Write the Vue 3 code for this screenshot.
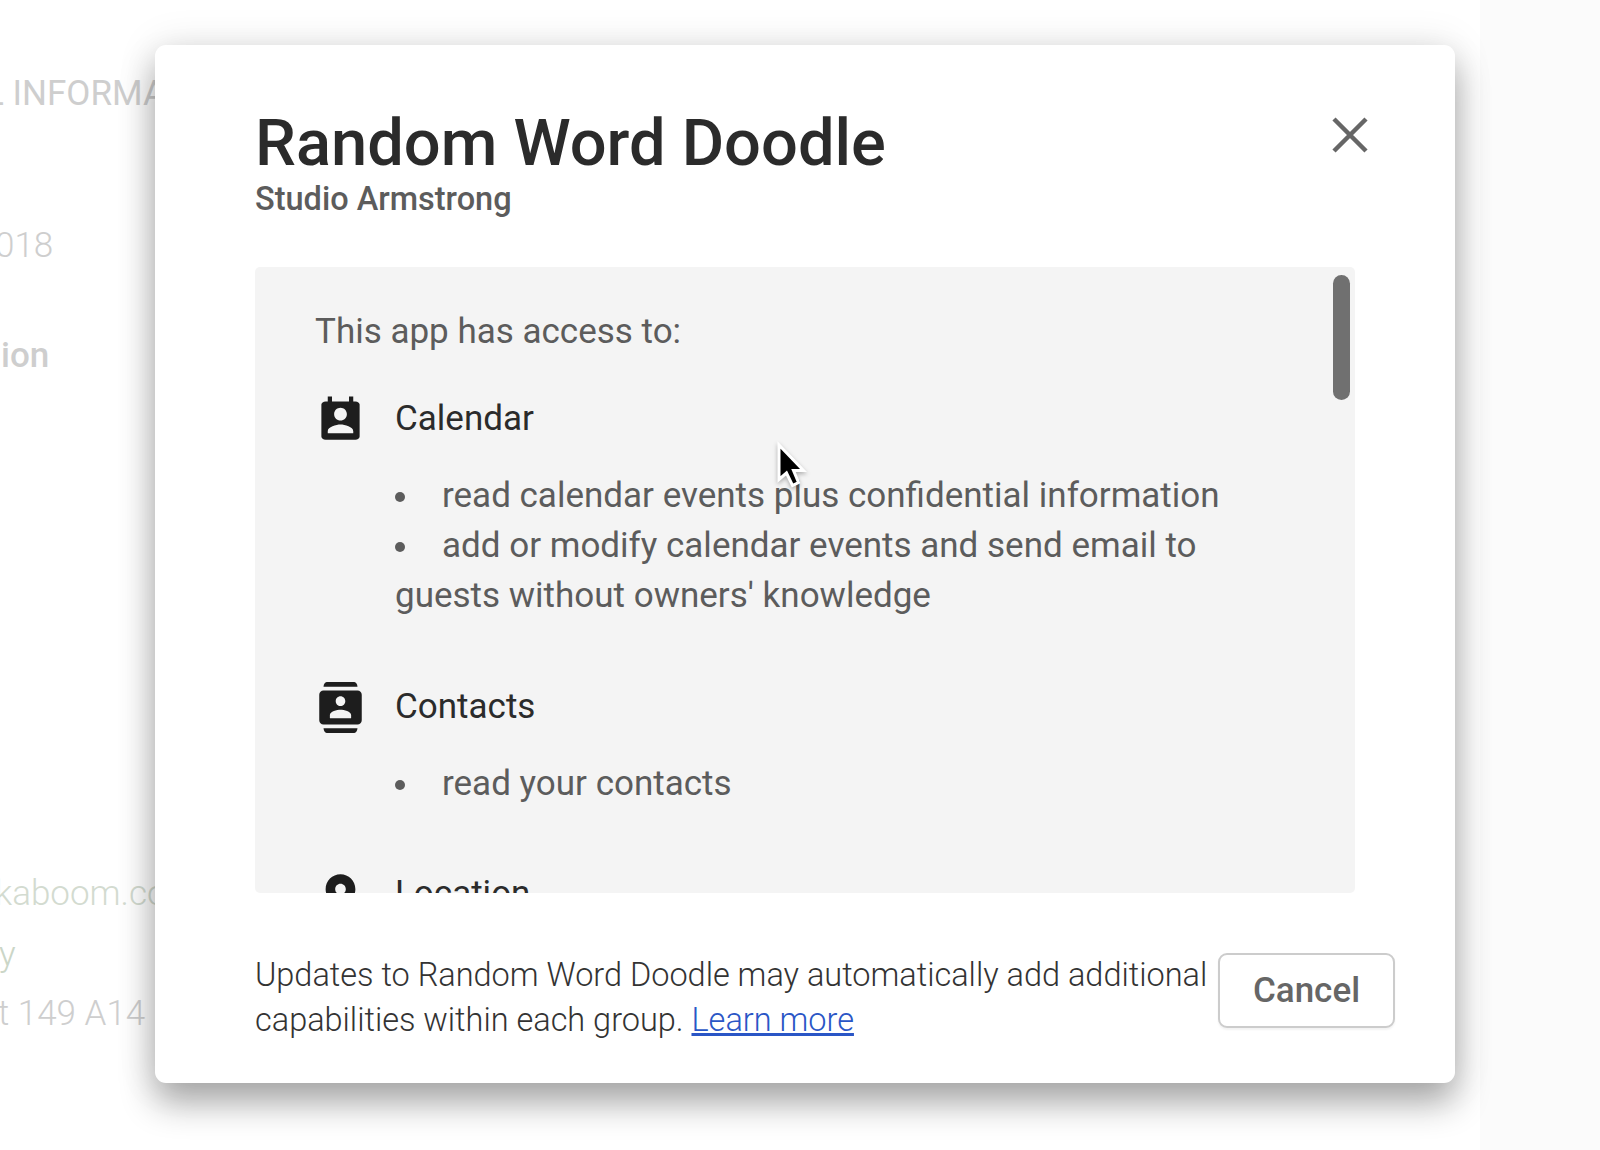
<script setup>
const details = [
  { text: 'L INFORMATION', kind: 'heading' },
  { text: '018', kind: 'date' },
  { text: 'ion', kind: 'label' },
  { text: 'kaboom.com', kind: 'mail' },
  { text: 'y', kind: 'policy' },
  { text: 't 149 A14', kind: 'address' },
]

const permissions = [
  {
    name: 'Calendar',
    icon: 'M19 3h-1V.7h-2V3H8V.7H6V3H5c-1.11 0-2 .7-2 1.500v15c0 .8.89 1.500 2 1.500h14c1.1 0 2-.7 2-1.500v-15c0-.8-.9-1.500-2-1.500zm-7 3c1.66 0 3 1.34 3 3s-1.34 3-3 3-3-1.34-3-3 1.34-3 3-3zm6 12H6v-1c0-2 4-3.1 6-3.1s6 1.1 6 3.1v1z',
    items: [
      'read calendar events plus confidential information',
      "add or modify calendar events and send email to guests without owners' knowledge",
    ],
  },
  {
    name: 'Contacts',
    icon: 'M18.500 0H5.500Q4.200.3 4 2.200h16Q19.800.3 18.500 0zM5.500 24h13Q19.800 23.700 20 21.800H4q.2 1.900 1.500 2.200zM20 4H4c-1.100 0-2 .9-2 2v12c0 1.100.9 2 2 2h16c1.100 0 2-.9 2-2V6c0-1.100-.9-2-2-2zm-8 2.750c1.240 0 2.250 1.010 2.250 2.250s-1.010 2.250-2.250 2.250S9.750 10.240 9.750 9 10.760 6.750 12 6.750zM17 17H7v-1.500c0-1.670 3.330-2.500 5-2.500s5 .83 5 2.500V17z',
    items: ['read your contacts'],
  },
  {
    name: 'Location',
    icon: 'M12 2C8.130 2 5 5.130 5 9c0 5.250 7 13 7 13s7-7.750 7-13c0-3.870-3.130-7-7-7zm0 9.500c-1.380 0-2.500-1.120-2.500-2.500s1.120-2.500 2.500-2.500 2.500 1.120 2.500 2.500-1.120 2.500-2.500 2.500z',
    items: [],
  },
]
</script>

<template>
  <div class="page">
    <main class="sheet">
      <p v-for="d in details" :key="d.kind" :class="['detail', d.kind]">{{ d.text }}</p>
    </main>

    <section class="dialog" role="dialog">
      <header class="header">
        <div>
          <h1>Random Word Doodle</h1>
          <h2>Studio Armstrong</h2>
        </div>
        <button class="close" aria-label="Close">
          <svg viewBox="0 0 36 36"><path d="M2 2 34 34M34 2 2 34" /></svg>
        </button>
      </header>

      <div class="panel">
        <div class="content">
          <p class="intro">This app has access to:</p>
          <div v-for="p in permissions" :key="p.name" class="permission">
            <svg class="icon" viewBox="0 0 24 24"><path :d="p.icon" /></svg>
            <div>
              <h3>{{ p.name }}</h3>
              <ul>
                <li v-for="item in p.items" :key="item"><i class="dot"></i>{{ item }}</li>
              </ul>
            </div>
          </div>
        </div>
        <div class="thumb"></div>
      </div>

      <footer class="footer">
        <p>
          Updates to Random Word Doodle may automatically add additional<br />
          capabilities within each group. <a href="#">Learn more</a>
        </p>
        <button class="cancel">Cancel</button>
      </footer>
    </section>

    <svg class="cursor" viewBox="0 0 30 46">
      <path d="M2 2V36.500L9.500 30 15.500 42.500 21.500 39.500 16.500 27.500H26.500Z" />
    </svg>
  </div>
</template>

<style>
body {
  margin: 0;
  overflow: hidden;
}
</style>

<style scoped>
.page {
  position: relative;
  box-sizing: border-box;
  width: 1600px;
  height: 1150px;
  padding-right: 120px;
  overflow: hidden;
  background: #fbfbfb;
  font-family: Roboto, "Liberation Sans", sans-serif;
}
.sheet {
  display: flex;
  flex-direction: column;
  height: 1150px;
  background: #fff;
}
p, h1, h2, h3, ul {
  margin: 0;
  padding: 0;
}
.detail {
  font-size: 35px;
  line-height: 50px;
  white-space: nowrap;
  color: #cecece;
}
.heading {
  margin-top: 69px;
  margin-left: -15px;
}
.date {
  margin-top: 102px;
  margin-left: -5px;
  font-weight: 300;
}
.label {
  margin-top: 60px;
  margin-left: 1px;
  font-weight: 500;
}
.mail {
  margin-top: 488px;
  margin-left: -5px;
  font-weight: 300;
  color: #d3dbd0;
}
.policy {
  margin-top: 11px;
  margin-left: -1px;
  font-weight: 300;
  color: #cbd6c7;
}
.address {
  margin-top: 9px;
  margin-left: -2px;
  font-weight: 300;
}
.dialog {
  position: absolute;
  top: 45px;
  left: 155px;
  box-sizing: border-box;
  width: 1300px;
  height: 1037.5px;
  padding: 61px 60px 0 100px;
  border-radius: 11px;
  background: #fff;
  box-shadow: 0 0 40px rgba(0, 0, 0, 0.1), 0 20px 35px rgba(0, 0, 0, 0.32);
}
.header {
  display: flex;
  justify-content: space-between;
  height: 161px;
}
h1 {
  font-size: 65px;
  font-weight: 500;
  line-height: 75px;
  color: #2b2b2b;
}
h2 {
  margin-top: -4px;
  font-size: 32.5px;
  font-weight: 500;
  line-height: 45px;
  color: #5c5c5c;
}
.close {
  width: 36px;
  height: 36px;
  margin: 11px 27px 0 0;
  padding: 0;
  border: 0;
  background: none;
}
.close svg {
  display: block;
  fill: none;
  stroke: #666;
  stroke-width: 4.5;
}
.panel {
  display: flex;
  justify-content: space-between;
  box-sizing: border-box;
  width: 1100px;
  height: 625.5px;
  padding: 8px 5px 0 60px;
  overflow: hidden;
  border-radius: 5px;
  background: #f4f4f4;
}
.content {
  width: 960px;
  padding-top: 31.5px;
}
.intro {
  font-size: 35px;
  line-height: 50px;
  color: #5c5c5c;
}
.permission {
  display: flex;
  gap: 29px;
  margin-top: 60px;
}
.intro + .permission {
  margin-top: 37.5px;
}
.icon {
  flex: none;
  width: 51px;
  height: 51px;
  margin-top: 0.5px;
  fill: #1d1d1d;
}
h3 {
  font-size: 35px;
  font-weight: 400;
  line-height: 50px;
  color: #2b2b2b;
}
ul {
  width: 860px;
  margin-top: 27px;
  margin-bottom: 0.5px;
  list-style: none;
}
li {
  font-size: 35px;
  line-height: 50px;
  color: #5c5c5c;
}
.dot {
  display: inline-block;
  width: 10px;
  height: 10px;
  margin-right: 37px;
  border-radius: 50%;
  background: #5c5c5c;
  vertical-align: 5px;
}
.thumb {
  width: 17.5px;
  height: 125px;
  border-radius: 9px;
  background: #707070;
}
.footer {
  display: flex;
  justify-content: space-between;
  margin-top: 60px;
}
.footer p {
  font-size: 32.5px;
  font-weight: 300;
  line-height: 45px;
  letter-spacing: -0.015px;
  white-space: nowrap;
  color: #333;
}
a {
  color: #2a56c6;
  text-decoration-thickness: 2.5px;
}
.cancel {
  box-sizing: border-box;
  width: 177px;
  height: 75px;
  padding: 1px 0 0;
  border: 2px solid #ccc;
  border-radius: 9px;
  background: #fff;
  box-shadow: 0 2px 2px rgba(0, 0, 0, 0.05);
  font: 500 35px Roboto, "Liberation Sans", sans-serif;
  color: #666;
}
.cursor {
  position: absolute;
  top: 443px;
  left: 777px;
  width: 30px;
  height: 46px;
  overflow: visible;
  stroke: #fff;
  stroke-width: 3;
  filter: drop-shadow(0 2px 2px rgba(0, 0, 0, 0.3));
}
</style>
